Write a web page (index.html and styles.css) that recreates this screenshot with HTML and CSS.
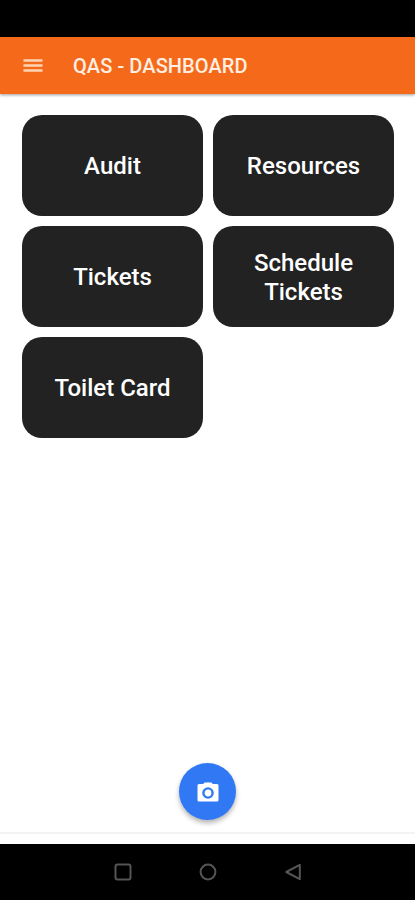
FILE: index.html
```html
<!DOCTYPE html>
<html lang="en">
<head>
    <meta charset="UTF-8">
    <meta name="viewport" content="width=device-width, initial-scale=1.0">
    <title>QAS - Dashboard</title>
    <link rel="stylesheet" href="styles.css">
</head>
<body>
    <div class="status-bar"></div>

    <header class="toolbar">
        <button class="menu-btn" aria-label="Menu">
            <svg width="20" height="14" viewBox="0 0 20 14">
                <path d="M0.5 1.5h19M0.5 6.5h19M0.5 11.5h19" stroke="#ffd3b5" stroke-width="2.4"/>
            </svg>
        </button>
        <h1>QAS - DASHBOARD</h1>
    </header>

    <main class="content">
        <div class="grid">
            <a class="card">Audit</a>
            <a class="card">Resources</a>
            <a class="card">Tickets</a>
            <a class="card">Schedule Tickets</a>
            <a class="card">Toilet Card</a>
        </div>
        <button class="camera-btn" aria-label="Camera">
            <svg width="22" height="20" viewBox="0 0 22 20">
                <path fill="#fff" d="M7.5 0.5h7l1.3 1.500H20a1.5 1.5 0 0 1 1.5 1.5v14.500a1.5 1.5 0 0 1-1.5 1.5H2A1.5 1.5 0 0 1 0.5 18V3.500A1.5 1.5 0 0 1 2 2h4.200z"/>
                <circle cx="11" cy="11" r="4.600" fill="#fff" stroke="#3179f4" stroke-width="2.400"/>
            </svg>
        </button>
    </main>

    <div class="tab-bar"></div>

    <nav class="system-nav">
        <svg width="18" height="18" viewBox="0 0 18 18">
            <rect x="1.500" y="1.500" width="15" height="15" rx="2"/>
        </svg>
        <svg width="18" height="18" viewBox="0 0 18 18">
            <circle cx="9" cy="9" r="7.400"/>
        </svg>
        <svg width="18" height="18" viewBox="0 0 18 18">
            <path d="M15.800 1.800v14.400L2.200 9z"/>
        </svg>
    </nav>
</body>
</html>
```
FILE: styles.css
```css
* {
    box-sizing: border-box;
}

body {
    margin: 0;
    height: 900px;
    display: flex;
    flex-direction: column;
    font-family: Roboto, sans-serif;
    background-color: #fff;
    overflow: hidden;
}

button {
    border: none;
    padding: 0;
    background: none;
    cursor: pointer;
}

.status-bar {
    height: 37px;
    background-color: #000;
}

.toolbar {
    height: 57px;
    display: flex;
    align-items: center;
    gap: 30px;
    padding-left: 23px;
    background-color: #f46a1a;
    box-shadow: 0 1px 3px rgba(0, 0, 0, 0.4);
}

.menu-btn {
    display: flex;
}

.toolbar h1 {
    margin: 0;
    font-size: 20px;
    font-weight: 500;
    letter-spacing: 0.08px;
    color: #ffeee2;
}

.content {
    flex: 1;
    display: flex;
    flex-direction: column;
    align-items: center;
    justify-content: space-between;
    padding: 21px 21px 12px;
}

.grid {
    width: 100%;
    display: grid;
    grid-template-columns: 1fr 1fr;
    grid-auto-rows: 101px;
    gap: 10px;
    padding-left: 1px;
}

.card {
    display: flex;
    align-items: center;
    justify-content: center;
    padding: 2px 32px 0;
    border-radius: 20px;
    background-color: #222;
    color: #fff;
    font-size: 24px;
    font-weight: 500;
    line-height: 29px;
    text-align: center;
}

.camera-btn {
    width: 57px;
    height: 57px;
    display: flex;
    align-items: center;
    justify-content: center;
    border-radius: 50%;
    background-color: #3179f4;
    box-shadow: 0 3px 5px rgba(0, 0, 0, 0.3);
}

.tab-bar {
    height: 12px;
    border-top: 2px solid #f3f3f3;
}

.system-nav {
    height: 56px;
    display: flex;
    justify-content: center;
    align-items: center;
    gap: 67px;
    background-color: #000;
}

.system-nav svg {
    fill: none;
    stroke: #555;
    stroke-width: 2;
    stroke-linejoin: round;
}
```
